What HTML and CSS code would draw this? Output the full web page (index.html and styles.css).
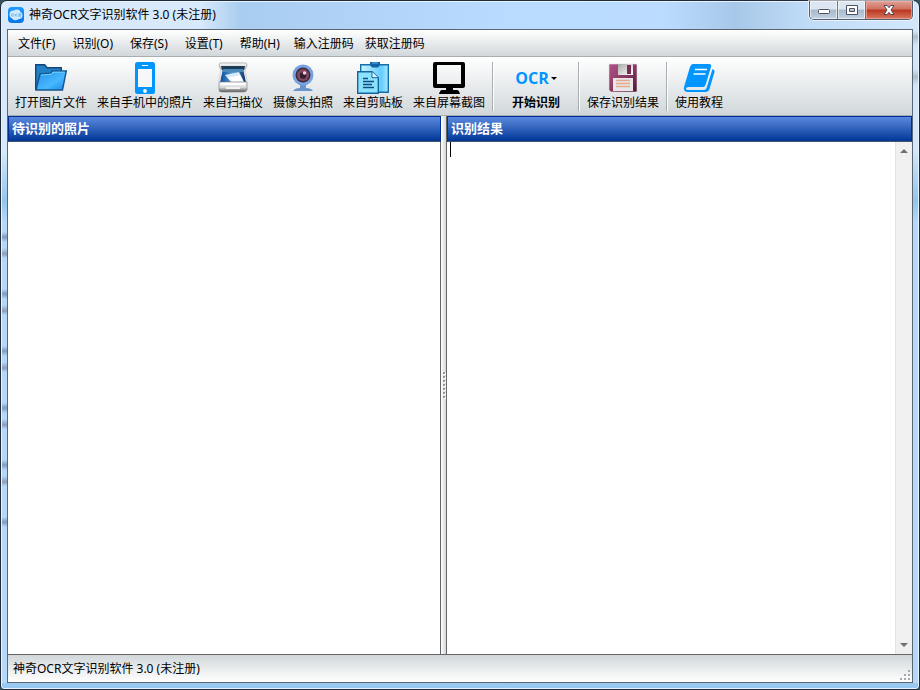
FILE: index.html
```
<!DOCTYPE html>
<html lang="zh-CN">
<head>
<meta charset="utf-8">
<title>神奇OCR文字识别软件 3.0 (未注册)</title>
<link rel="stylesheet" href="styles.css">
</head>
<body>
<div class="window">
  <header class="titlebar">
    <svg class="logo" viewBox="0 0 16 16" aria-hidden="true">
      <defs><linearGradient id="logoBlue" x2="0" y2="1"><stop stop-color="#1e9bff"/><stop offset="1" stop-color="#0675e8"/></linearGradient></defs>
      <rect width="16" height="16" rx="4" fill="url(#logoBlue)"/>
      <circle cx="5.5" cy="7.5" r="4" fill="#cfeaff"/><circle cx="9" cy="6" r="3.6" fill="#cfeaff"/><circle cx="11" cy="8.5" r="3.4" fill="#cfeaff"/><circle cx="7.5" cy="9.5" r="3.8" fill="#cfeaff"/>
      <g fill="none" stroke="#5cb2f5" stroke-width=".8"><circle cx="4.6" cy="8" r="1.3"/><path d="M9.4 7H7.600v2h1.800M11 10V6.800h1.600v1.600H11l1.800 1.600"/></g>
    </svg>
    <h1 class="title">神奇OCR文字识别软件 3.0 (未注册)</h1>
    <div class="controls">
      <button class="control" type="button" aria-label="最小化"><svg viewBox="0 0 14 12"><rect x="1.500" y="5.500" width="11" height="4" rx="1" fill="#fff" stroke="#4a5264"/></svg></button>
      <button class="control" type="button" aria-label="最大化"><svg viewBox="0 0 14 12"><path fill="#fff" fill-rule="evenodd" stroke="#4a5264" d="M1.500 1.500h11v9h-11zM4.500 4.500v3h5v-3z"/></svg></button>
      <button class="control close" type="button" aria-label="关闭"><svg viewBox="0 0 14 12"><path fill="#fff" stroke="#4f4653" d="M2 1.500h3.200L7 3.700l1.800-2.200H12L9 6l3 4.500H8.800L7 8.300l-1.800 2.200H2L5 6z"/></svg></button>
    </div>
  </header>

  <main class="client">
    <nav class="menubar">
      <button type="button">文件(F)</button>
      <button type="button">识别(O)</button>
      <button type="button">保存(S)</button>
      <button type="button">设置(T)</button>
      <button type="button">帮助(H)</button>
      <button type="button" class="tight">输入注册码</button>
      <button type="button" class="tight">获取注册码</button>
    </nav>

    <div class="toolbar" role="toolbar">
      <button class="tool" type="button">
        <svg viewBox="0 0 32 32" aria-hidden="true">
          <defs><linearGradient id="folder" x2="1" y2="1"><stop stop-color="#2090e8"/><stop offset=".6" stop-color="#48b8ff"/><stop offset="1" stop-color="#1686e8"/></linearGradient></defs>
          <path d="M.7 28V2.700h9l2.300 3h14.300V11" fill="#2181c4" stroke="#15457a" stroke-width="1.400"/>
          <path d="M1 28 5 12l11-.8 1-2.200h14.300L27.500 28z" fill="url(#folder)" stroke="#15558f" stroke-width="1.400"/>
          <path d="M6 13l10.700-.8 1-2h12" fill="none" stroke="#73d4ff"/>
        </svg>
        <span>打开图片文件</span>
      </button>
      <button class="tool" type="button">
        <svg viewBox="0 0 32 32" aria-hidden="true">
          <rect x="6" width="20" height="32" rx="2.500" fill="#0095ff"/><path d="M9 7h14v18H9z" fill="#f5f7f8"/><path d="M13 3h6v1h-6z" fill="#fff"/><circle cx="16" cy="29" r="1.900" fill="#fff"/>
        </svg>
        <span>来自手机中的照片</span>
      </button>
      <button class="tool" type="button">
        <svg viewBox="0 0 32 32" aria-hidden="true">
          <defs><linearGradient id="lid" x2="0" y2="1"><stop stop-color="#fff"/><stop offset="1" stop-color="#b4b7bb"/></linearGradient><linearGradient id="metal" x2="0" y2="1"><stop stop-color="#fff"/><stop offset=".55" stop-color="#d4d5d7"/><stop offset="1" stop-color="#555"/></linearGradient><linearGradient id="glass" x2="1"><stop stop-color="#0d4c9b"/><stop offset=".5" stop-color="#5a9fda"/><stop offset="1" stop-color="#0a3263"/></linearGradient></defs>
          <path d="M4 1h24q2 0 2 2l-1 3q-1 2-2 2H5Q4 8 3 6L2 3q0-2 2-2z" fill="url(#lid)" stroke="#999" stroke-width=".7"/>
          <path d="M4 4h24l-1 4H5z" fill="#1d3c58"/><path d="M6 7h20l3 13H3z" fill="url(#glass)"/><path d="M6 7h20l.5 3h-21z" fill="#4c88b8"/><path d="M8 13l14-3 5 10H14z" fill="#d9eafa"/><path d="M11 16l12-3 3 6-11 1z" fill="#fff"/>
          <path d="M4 8 2 20M28 8l2 12" stroke="#dedfe1" stroke-width="2"/>
          <path d="M2 20h28v8q-1 2-3 2H5q-3 0-3-2z" fill="url(#metal)" stroke="#888" stroke-width=".7"/><path d="M4 21h24v2H4z" fill="#fff"/><path d="M9 25h14v2H9z" fill="#f1f1f1"/>
        </svg>
        <span>来自扫描仪</span>
      </button>
      <button class="tool" type="button">
        <svg viewBox="0 0 32 32" aria-hidden="true">
          <path d="M13 22h6v4q5 0 7 3H6q2-3 7-3z" fill="#6993cb"/><circle cx="16" cy="13" r="10.500" fill="#76a3df"/><circle cx="16" cy="13" r="7.500" fill="#3d2938"/><circle cx="16" cy="13" r="6" fill="#804866"/><circle cx="16" cy="13.500" r="3.200" fill="#341d2c"/><circle cx="17.500" cy="11" r="1.700" fill="#f0d3e0"/>
        </svg>
        <span>摄像头拍照</span>
      </button>
      <button class="tool" type="button">
        <svg viewBox="0 0 32 32" aria-hidden="true">
          <defs><linearGradient id="board" x2="1"><stop stop-color="#c8f4ff"/><stop offset=".75" stop-color="#66ccff"/><stop offset="1" stop-color="#a9eaff"/></linearGradient></defs>
          <path d="M3.700 2.700h27.600v27.600H3.700z" fill="url(#board)" stroke="#176da5" stroke-width="1.400"/><path d="M13 0h10v3l-2 2.500h-6L13 3z" fill="#1261a5"/><path d="M15 1h6" stroke="#58b5e8"/>
          <path d="M.7 9.700H15l6.300 6v15.600H.7z" fill="#8be2ff" stroke="#13659f" stroke-width="1.400"/><path d="M15 9.700v6h6.300" fill="#dfffff" stroke="#13659f"/><path d="M6 16.500h5M6 19.500h11M6 22.500h9M6 25.500h11" stroke="#104d85" stroke-width="1.300"/>
        </svg>
        <span>来自剪贴板</span>
      </button>
      <button class="tool" type="button">
        <svg viewBox="0 0 32 32" aria-hidden="true">
          <path fill="#000" fill-rule="evenodd" d="M2 0h28q2 0 2 2v22q0 2-2 2H20v2h4q2 0 3 4H6q1-4 3-4h4v-2H2q-2 0-2-2V2Q0 0 2 0zm2 3v19h24V3z"/>
        </svg>
        <span>来自屏幕截图</span>
      </button>
      <span class="separator"></span>
      <button class="tool start" type="button">
        <strong class="ocr">OCR<i class="arrow"></i></strong>
        <span>开始识别</span>
      </button>
      <span class="separator"></span>
      <button class="tool" type="button">
        <svg viewBox="0 0 32 32" aria-hidden="true">
          <defs><linearGradient id="disk" x2="1" y2="1"><stop stop-color="#b05487"/><stop offset=".5" stop-color="#8b3b65"/><stop offset="1" stop-color="#4c1733"/></linearGradient><linearGradient id="shutter" x2="1" y2="1"><stop stop-color="#aaa"/><stop offset="1" stop-color="#fff"/></linearGradient></defs>
          <path d="M3 2h26q1 0 1 1v26q0 1-1 1H4l-2-2V3q0-1 1-1z" fill="url(#disk)" stroke="#e8dce2" stroke-width=".6"/><path d="M11 2h15v11H11z" fill="url(#shutter)"/><path d="M20 3h4v9h-4z" fill="#7a2c55"/><path d="M6 16h20v13H6z" fill="#e8e6e8"/><path d="M9 18.500h14M9 21.500h14M9 24.500h14" stroke="#e5a98c" stroke-width="1.400"/>
        </svg>
        <span>保存识别结果</span>
      </button>
      <span class="separator"></span>
      <button class="tool" type="button">
        <svg viewBox="0 0 32 32" aria-hidden="true">
          <path d="M10 2h16q3 0 2 3l-5.500 18q-.5 2-2.500 2H6q-3 0-3 1.500T6 28h15q2 0 2.600-2L29.500 7q2.500 1 2 3l-5 17q-1 3-4 3H5q-5 0-4-5L7 5q1-3 3-3z" fill="#0095ff"/><path d="M12 7.500h12M10.500 12h12" stroke="#fff" stroke-width="1.700"/>
        </svg>
        <span>使用教程</span>
      </button>
    </div>

    <div class="panels">
      <section class="panel">
        <h2>待识别的照片</h2>
        <div class="photos"></div>
      </section>
      <div class="splitter"><i></i><i></i><i></i><i></i><i></i><i></i><i></i></div>
      <section class="panel">
        <h2><label for="result">识别结果</label></h2>
        <div class="editor">
          <textarea id="result"></textarea>
          <span class="caret"></span>
          <div class="scrollbar">
            <button type="button" aria-label="向上滚动"><svg viewBox="0 0 8 4"><path d="M4 0l4 4H0z" fill="#707070"/></svg></button>
            <button type="button" aria-label="向下滚动"><svg viewBox="0 0 8 4"><path d="M0 0h8L4 4z" fill="#707070"/></svg></button>
          </div>
        </div>
      </section>
    </div>

    <footer class="status">
      <span>神奇OCR文字识别软件 3.0 (未注册)</span>
      <svg class="grip" viewBox="0 0 10 10" aria-hidden="true"><path fill="#a6a9ac" d="M8 0h2v2H8zM4 4h2v2H4zM8 4h2v2H8zM0 8h2v2H0zM4 8h2v2H4zM8 8h2v2H8z"/></svg>
    </footer>
  </main>
</div>
</body>
</html>
```
FILE: styles.css
```
* { box-sizing: border-box; }

body {
  margin: 0;
  background: #35545c;
  color: #000;
  font: 12px/16px "Noto Sans", "Noto Sans CJK SC", sans-serif;
}

button {
  margin: 0;
  padding: 0;
  border: 0;
  background: none;
  color: inherit;
  font: inherit;
}

svg { display: block; }

.window {
  display: flex;
  flex-direction: column;
  height: 100vh;
  padding: 0 6px 6px;
  border: 1px solid #202a38;
  border-radius: 7px 7px 4px 4px;
  box-shadow: inset 0 0 0 1px #e5f4ff;
  background:
    linear-gradient(#99c8f0, #99c8f0) bottom / 100% 6px no-repeat,
    repeating-linear-gradient(#b8d8f800 0 31px, #8099c0 36px, #b8d8f800 41px 47px, #8b9eb8 53px, #b8d8f800 57px) 0 200px / 6px 330px no-repeat,
    linear-gradient(#8d9aaa00 30px, #8d9aaa88 36px, #8d9aaa00 44px 68px, #8d9aaa88 76px, #8d9aaa00 84px) right / 6px 100% no-repeat,
    linear-gradient(#b5d7f800 28px, #b5d7f800 150px, #91c6ef 200px, #b5d7f8 220px),
    linear-gradient(90deg, #d7e9fa 0, #d7e9fa 200px, #a9cdf0 240px, #b8dbff 55%, #bbdcff 72%, #a7c8e8 80%, #c0dcf7 88%, #d3e7fb);
}

.titlebar {
  display: flex;
  align-items: center;
  flex: none;
  height: 28px;
  padding-left: 1px;
}

.logo { width: 16px; height: 16px; }

.title {
  flex: 1;
  margin: 0 0 0 5px;
  font-size: 12px;
  font-weight: 400;
}

.controls {
  display: flex;
  align-self: flex-start;
  height: 19px;
  border: 1px solid #535d70;
  border-top: 0;
  border-radius: 0 0 5px 5px;
  box-shadow: 0 0 0 1px #ffffff99;
  overflow: hidden;
}

.control {
  display: grid;
  place-items: center;
  width: 28px;
  border-right: 1px solid #68758a;
  box-shadow: inset 0 0 0 1px #ffffff99;
  background: linear-gradient(#dce6f2 0 45%, #a9b9cc 50%, #c1d2e4);
}

.control svg { width: 14px; height: 12px; }

.control.close {
  width: 46px;
  border: 0;
  box-shadow: inset 0 0 0 1px #f3b8aa99;
  background: linear-gradient(#dfa298, #d0705f 45%, #b93620 50%, #d87860);
}

.client {
  display: flex;
  flex: 1;
  flex-direction: column;
  min-height: 0;
  border: 1px solid #5c6670;
  background: #dce1e3;
}

.menubar {
  display: flex;
  align-items: center;
  flex: none;
  gap: 1px;
  height: 27px;
  padding: 2px 0 0 2px;
  border-bottom: 1px solid #a9adaf;
  background: linear-gradient(#fff, #d1d7da);
}

.menubar button { padding: 0 8px; }
.menubar button.tight { padding: 0 5px; }

.toolbar {
  display: flex;
  flex: none;
  height: 59px;
  padding-left: 2px;
  border-bottom: 1px solid #a9adaf;
  background: linear-gradient(#fff, #d1d7da);
}

.tool {
  display: flex;
  flex-direction: column;
  align-items: center;
  gap: 1px;
  padding: 5px 5px 0;
  white-space: nowrap;
}

.tool svg { width: 32px; height: 32px; }

.start {
  width: 80px;
  font-weight: 700;
}

.ocr {
  display: flex;
  align-items: center;
  gap: 2px;
  height: 32px;
  color: #0095ff;
  font-family: "Open Sans", sans-serif;
  font-size: 16px;
  font-weight: 700;
}

.arrow {
  border: 3px solid transparent;
  border-top-color: #000;
  border-bottom: 0;
}

.separator {
  flex: none;
  width: 2px;
  height: 49px;
  margin: 5px 2px 0;
  border-left: 1px solid #a9adaf;
  border-right: 1px solid #fff;
}

.panels {
  display: grid;
  grid-template-columns: 433fr 6px 465fr;
  flex: 1;
  min-height: 0;
}

.panel {
  display: flex;
  flex-direction: column;
  min-width: 0;
}

.panel h2 {
  flex: none;
  height: 26px;
  margin: 0;
  padding: 0 3px;
  border: 1px solid #002d96;
  border-bottom-color: #47536b;
  background: linear-gradient(#5a8ade, #023796);
  color: #fff;
  font-size: 13px;
  font-weight: 700;
  line-height: 22px;
}

.photos {
  flex: 1;
  border-right: 1px solid #666;
  background: #fff;
}

.splitter {
  display: flex;
  flex-direction: column;
  align-items: center;
  justify-content: center;
  gap: 2px;
  border-right: 1px solid #666;
  background: linear-gradient(90deg, #fff, #d1d7da);
}

.splitter i {
  width: 2px;
  height: 2px;
  background: #999;
  box-shadow: 1px 1px #fff;
}

.editor {
  position: relative;
  display: flex;
  flex: 1;
  min-height: 0;
}

.editor textarea {
  flex: 1;
  min-width: 0;
  padding: 1px 4px;
  border: 0;
  outline: 0;
  resize: none;
  background: #fff;
  font: inherit;
}

.caret {
  position: absolute;
  top: 0;
  left: 3px;
  width: 1px;
  height: 15px;
  background: #000;
}

.scrollbar {
  display: flex;
  flex-direction: column;
  justify-content: space-between;
  width: 17px;
  border-left: 1px solid #e3e3e3;
  background: #f0f0f0;
}

.scrollbar button {
  display: grid;
  place-items: center;
  height: 18px;
}

.scrollbar svg { width: 8px; height: 4px; }

.status {
  display: flex;
  align-items: center;
  justify-content: space-between;
  flex: none;
  height: 28px;
  padding: 0 2px 0 5px;
  border-top: 1px solid #666;
  background: linear-gradient(#d1d7da, #fff);
}

.grip {
  align-self: flex-end;
  width: 10px;
  height: 10px;
  margin-bottom: 2px;
}
```
